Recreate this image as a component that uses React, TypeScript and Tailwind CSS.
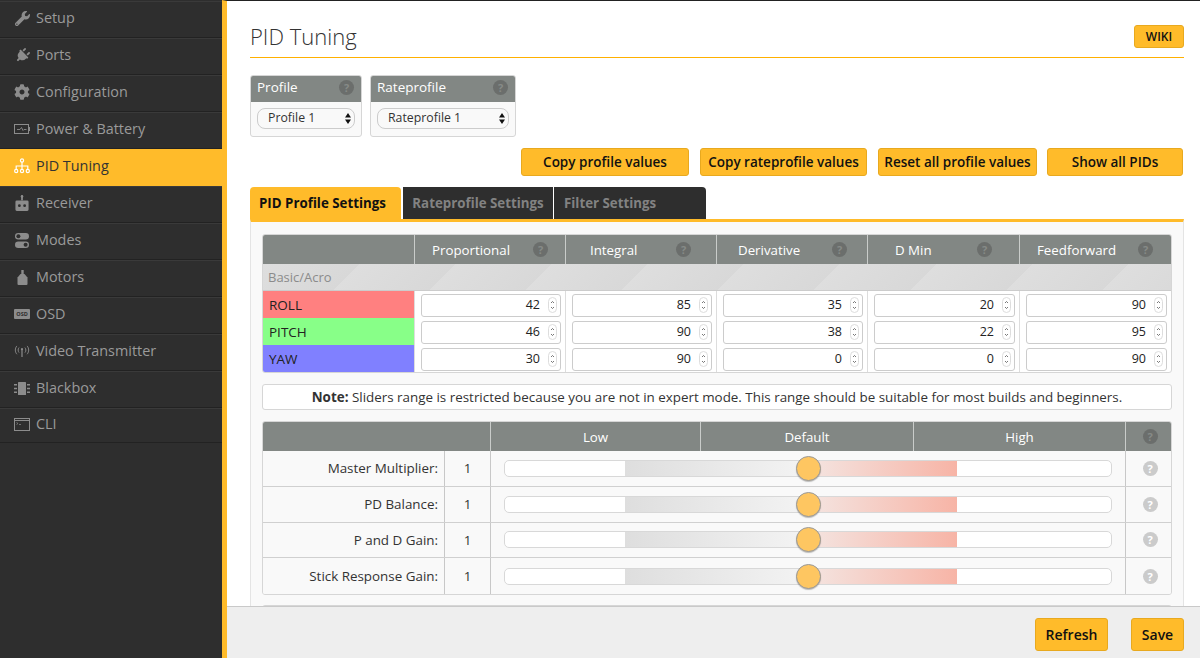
import type { ReactNode } from 'react';
import { FaCog, FaPlug, FaWrench } from 'react-icons/fa';

function PowerIcon() {
  return (
    <svg viewBox="0 0 16 10" className="w-[16px] h-[10px]" fill="none" stroke="currentColor">
      <rect x="0.5" y="0.5" width="14" height="9" strokeWidth="1" />
      <rect x="14.5" y="3" width="1.5" height="4" fill="currentColor" stroke="none" />
      <path d="M3 5.5h3l1.5-2 1.5 3 1-1h2.5" strokeWidth="0.9" />
    </svg>
  );
}

function SitemapIcon() {
  return (
    <svg viewBox="0 0 16 16" className="w-[16px] h-[16px]" fill="none" stroke="currentColor" strokeWidth="1.2">
      <circle cx="8" cy="2.5" r="1.6" />
      <circle cx="2.2" cy="13" r="1.6" />
      <circle cx="8" cy="13" r="1.6" />
      <circle cx="13.8" cy="13" r="1.6" />
      <path d="M8 4v7.4M2.2 11.4V8h11.6v3.4" />
    </svg>
  );
}

function ReceiverIcon() {
  return (
    <svg viewBox="0 0 16 18" className="w-[14px] h-[16px]" fill="currentColor">
      <rect x="7" y="0" width="2" height="6" />
      <circle cx="8" cy="1.5" r="1.5" />
      <path d="M2 6h12a1.5 1.5 0 0 1 1.5 1.5v9A1.5 1.5 0 0 1 14 18H2a1.5 1.5 0 0 1-1.5-1.5v-9A1.5 1.5 0 0 1 2 6z" />
      <circle cx="5" cy="12" r="1.6" fill="#2e2e2e" />
      <circle cx="11" cy="12" r="1.6" fill="#2e2e2e" />
    </svg>
  );
}

function ModesIcon() {
  return (
    <svg viewBox="0 0 14 15" className="w-[14px] h-[15px]" fill="currentColor">
      <rect x="0" y="0" width="14" height="6.5" rx="3.2" />
      <circle cx="3.4" cy="3.2" r="2" fill="#2e2e2e" />
      <rect x="0" y="8.5" width="14" height="6.5" rx="3.2" />
      <circle cx="10.6" cy="11.7" r="2" fill="#2e2e2e" />
    </svg>
  );
}

function MotorIcon() {
  return (
    <svg viewBox="0 0 11 15" className="w-[11px] h-[15px]" fill="currentColor">
      <rect x="4.3" y="0" width="2.4" height="5" />
      <path d="M3.5 4h4l3 3.5V14a1 1 0 0 1-1 1h-8a1 1 0 0 1-1-1V7.5z" />
    </svg>
  );
}

function OsdIcon() {
  return (
    <svg viewBox="0 0 16 10" className="w-[16px] h-[10px]">
      <rect width="16" height="10" rx="1" fill="currentColor" />
      <text x="8" y="7.2" textAnchor="middle" fontSize="5.5" fontWeight="700" fill="#2e2e2e" fontFamily="'Open Sans', sans-serif">
        OSD
      </text>
    </svg>
  );
}

function VtxIcon() {
  return (
    <svg viewBox="0 0 17 13" className="w-[16px] h-[12px]" fill="none" stroke="currentColor" strokeWidth="1">
      <path d="M3 1C.7 3.5.7 7.5 3 10M14 1c2.3 2.5 2.3 6.5 0 9M5.3 2.8c-1.3 1.6-1.3 3.8 0 5.4M11.7 2.8c1.3 1.6 1.3 3.8 0 5.4" />
      <path d="M8.5 4.5V13" strokeWidth="1.3" />
      <circle cx="8.5" cy="4.5" r="1.2" fill="currentColor" stroke="none" />
    </svg>
  );
}

function BlackboxIcon() {
  return (
    <svg viewBox="0 0 16 13" className="w-[16px] h-[13px]" fill="currentColor">
      <rect x="4" y="0" width="8" height="13" rx="0.5" />
      <path d="M0 2h3v1.4H0zM0 5.8h3v1.4H0zM0 9.6h3V11H0zM13 2h3v1.4h-3zM13 5.8h3v1.4h-3zM13 9.6h3V11h-3z" />
    </svg>
  );
}

function CliIcon() {
  return (
    <svg viewBox="0 0 16 13" className="w-[16px] h-[13px]" fill="none" stroke="currentColor">
      <rect x="0.5" y="0.5" width="15" height="12" strokeWidth="1" />
      <path d="M0.5 2.5h15" strokeWidth="1" />
      <path d="M2.5 4.5l1.5 1-1.5 1M5 6.5h2" strokeWidth="0.7" />
    </svg>
  );
}

const navItems: { label: string; icon: ReactNode; active?: boolean }[] = [
  { label: 'Setup', icon: <FaWrench size={15} /> },
  { label: 'Ports', icon: <FaPlug size={15} className="rotate-45" /> },
  { label: 'Configuration', icon: <FaCog size={16} /> },
  { label: 'Power & Battery', icon: <PowerIcon /> },
  { label: 'PID Tuning', icon: <SitemapIcon />, active: true },
  { label: 'Receiver', icon: <ReceiverIcon /> },
  { label: 'Modes', icon: <ModesIcon /> },
  { label: 'Motors', icon: <MotorIcon /> },
  { label: 'OSD', icon: <OsdIcon /> },
  { label: 'Video Transmitter', icon: <VtxIcon /> },
  { label: 'Blackbox', icon: <BlackboxIcon /> },
  { label: 'CLI', icon: <CliIcon /> },
];

const pidColumns = [
  { title: 'Proportional', pad: 'pl-[17px] pr-[17px]' },
  { title: 'Integral', pad: 'pl-[24px] pr-[25px]' },
  { title: 'Derivative', pad: 'pl-[21px] pr-[20px]' },
  { title: 'D Min', pad: 'pl-[27px] pr-[27px]' },
  { title: 'Feedforward', pad: 'pl-[17px] pr-[18px]' },
];

const pidRows = [
  { name: 'ROLL', color: 'bg-[#ff8080]', values: [42, 85, 35, 20, 90] },
  { name: 'PITCH', color: 'bg-[#88ff88]', values: [46, 90, 38, 22, 95] },
  { name: 'YAW', color: 'bg-[#8080ff]', values: [30, 90, 0, 0, 90] },
];

const sliders = ['Master Multiplier:', 'PD Balance:', 'P and D Gain:', 'Stick Response Gain:'];

function Help({ light }: { light?: boolean }) {
  return (
    <span
      className={`flex h-[15px] w-[15px] shrink-0 items-center justify-center rounded-full text-[11px] font-bold leading-none ${
        light ? 'bg-[#cbcbcb] text-white' : 'bg-[#6b6e6c] text-[#868a87]'
      }`}
    >
      ?
    </span>
  );
}

function YellowButton({ children, className }: { children: ReactNode; className: string }) {
  return (
    <div
      className={`flex items-center justify-center rounded-[3px] border border-[#e8a91f] bg-[#ffbb2a] font-semibold text-[#111] ${className}`}
    >
      {children}
    </div>
  );
}

function Select({ label }: { label: string }) {
  return (
    <div className="flex h-[21px] flex-1 items-center justify-between rounded-[8px] border border-[#ccc] bg-[#f9f9f9] pl-[10px] pr-[3px] text-[12.3px] text-[#333]">
      {label}
      <svg viewBox="0 0 6 11" className="h-[11px] w-[6px]" fill="#111">
        <path d="M3 0l3 4.4H0zM3 11L0 6.6h6z" />
      </svg>
    </div>
  );
}

function NumberField({ value }: { value: number }) {
  return (
    <div className="mt-[1px] flex h-[23px] items-center justify-end rounded-[3px] border border-[#ccc] bg-white pr-[3px] text-[12.5px] text-[#222]">
      {value}
      <span className="ml-[8px] flex h-[16px] w-[9px] items-center justify-center rounded-full border border-[#ddd]">
        <svg viewBox="0 0 5 10" className="h-[10px] w-[5px]" fill="none" stroke="#555" strokeWidth="0.8">
          <path d="M1 3l1.5-1.5L4 3M1 7l1.5 1.5L4 7" />
        </svg>
      </span>
    </div>
  );
}

export default function App() {
  return (
    <div className="flex h-[658px] w-[1200px] overflow-hidden bg-white font-['Open_Sans',sans-serif] text-[13px] text-[#333]">
      {/* Sidebar */}
      <nav className="w-[222px] shrink-0 bg-[#2e2e2e] pt-[1px] text-[14.4px] text-[#9a9a9a]">
        {navItems.map((item) => (
          <div
            key={item.label}
            className={`flex h-[37px] items-center border-b pb-[2px] last:h-[35px] ${
              item.active
                ? 'border-[#ffbb2a] bg-[#ffbb2a] text-[#333]'
                : 'border-[#222] shadow-[inset_0_1px_0_#3a3a3a]'
            }`}
          >
            <span className={`flex w-[36px] shrink-0 justify-center pl-[8px] ${item.active ? 'text-white' : 'text-[#8c8c8c]'}`}>
              {item.icon}
            </span>
            {item.label}
          </div>
        ))}
      </nav>

      {/* Main */}
      <div className="flex min-w-0 flex-1 flex-col border-l-[5px] border-t border-l-[#ffbb2a] border-t-[#222]">
        <main className="min-h-0 flex-1 overflow-hidden pl-[23px] pr-[16px]">
          <div className="flex h-[57px] items-start justify-between border-b border-b-[#ffb000]">
            <h1 className="mt-[17px] text-[22px] font-light leading-[36px] text-[#333]">PID Tuning</h1>
            <YellowButton className="mt-[24px] h-[23px] w-[50px] text-[12px]">WIKI</YellowButton>
          </div>

          {/* Profile selectors */}
          <div className="mt-[17px] flex gap-[8px]">
            {[
              { title: 'Profile', value: 'Profile 1', width: 'w-[112px]' },
              { title: 'Rateprofile', value: 'Rateprofile 1', width: 'w-[146px]' },
            ].map((box) => (
              <div key={box.title} className={`${box.width} overflow-hidden rounded-[3px] border border-[#d6d6d6] bg-[#f9f9f9]`}>
                <div className="flex h-[26px] items-center justify-between bg-[#828784] pb-[3px] pl-[6px] pr-[7px] text-[13.5px] font-medium text-white">
                  {box.title}
                  <Help />
                </div>
                <div className="flex h-[34px] items-center px-[6px] pb-[1px]">
                  <Select label={box.value} />
                </div>
              </div>
            ))}
          </div>

          {/* Actions */}
          <div className="mt-[11px] flex justify-end gap-[11px] pr-[1px] text-[13.5px]">
            <YellowButton className="h-[28px] w-[168px]">Copy profile values</YellowButton>
            <YellowButton className="h-[28px] w-[167px]">Copy rateprofile values</YellowButton>
            <YellowButton className="mr-[-1px] h-[28px] w-[159px]">Reset all profile values</YellowButton>
            <YellowButton className="h-[28px] w-[136px]">Show all PIDs</YellowButton>
          </div>

          {/* Tabs */}
          <div className="mt-[11px] flex h-[32px] gap-[1px] text-[13.3px] font-bold">
            <div className="mr-[1px] flex w-[151px] items-center rounded-t-[4px] bg-[#ffbb2a] pl-[9px] pt-[1px] text-[#111]">
              PID Profile Settings
            </div>
            <div className="flex w-[150px] items-center justify-center bg-[#2e2e2e] pt-[1px] text-[#828282]">
              Rateprofile Settings
            </div>
            <div className="flex w-[152px] items-center rounded-tr-[4px] bg-[#2e2e2e] pl-[10px] pt-[1px] text-[#828282]">
              Filter Settings
            </div>
          </div>

          {/* Panel */}
          <div className="border-x border-t-[3px] border-x-[#e4e4e4] border-t-[#ffbb2a] bg-[#f9f9f9] px-[11px] pt-[12px]">
            {/* PID table */}
            <div className="overflow-hidden rounded-[3px] border border-[#d6d6d6] bg-white">
              <div className="grid h-[29px] grid-cols-[151px_151px_151px_151px_152px_1fr] bg-[#828784] text-[13.3px] text-white">
                <div />
                {pidColumns.map((col) => (
                  <div key={col.title} className={`flex items-center justify-between border-l border-[#c9ccca] ${col.pad}`}>
                    <span className="pt-[2px]">{col.title}</span>
                    <Help />
                  </div>
                ))}
              </div>
              <div className="flex h-[27px] items-center border-b border-[#ccc] bg-[repeating-linear-gradient(135deg,#dedede_0px,#d8d8d8_68px,#dedede_68px)] pl-[5px] pt-[1px] text-[13px] text-[#8b8b8b]">
                Basic/Acro
              </div>
              {pidRows.map((row) => (
                <div key={row.name} className="grid h-[27px] grid-cols-[151px_151px_151px_151px_152px_1fr] text-[13.5px]">
                  <div className={`${row.color} flex items-center pl-[6px] pt-[1px] text-[#222]`}>{row.name}</div>
                  {row.values.map((value, i) => (
                    <div key={i} className="flex flex-col justify-center border-l border-[#ddd] pl-[6px] pr-[4px]">
                      <NumberField value={value} />
                    </div>
                  ))}
                </div>
              ))}
            </div>

            {/* Note */}
            <div className="mt-[11px] flex h-[26px] items-center justify-center rounded-[3px] border border-[#d6d6d6] bg-white text-[13.4px] text-[#333]">
              <span>
                <b className="font-bold">Note:</b> Sliders range is restricted because you are not in expert mode. This
                range should be suitable for most builds and beginners.
              </span>
            </div>

            {/* Sliders */}
            <div className="mt-[11px] overflow-hidden rounded-[3px] border border-[#d6d6d6]">
              <div className="grid h-[29px] grid-cols-[227px_210px_213px_212px_1fr] bg-[#828784] text-[13.3px] text-white">
                <div />
                {['Low', 'Default', 'High'].map((head) => (
                  <div key={head} className="flex items-center justify-center border-l border-[#c9ccca] pt-[2px]">
                    {head}
                  </div>
                ))}
                <div className="flex items-center justify-center border-l border-[#c9ccca] pl-[3px]">
                  <Help />
                </div>
              </div>
              {sliders.map((label) => (
                <div
                  key={label}
                  className="grid h-[35.75px] grid-cols-[181px_46px_635px_1fr] border-b border-[#d0d0d0] bg-[#f9f9f9] text-[13.4px] last:border-b-0"
                >
                  <div className="flex items-center justify-end pr-[6px] text-[#333]">{label}</div>
                  <div className="flex items-center justify-center border-l border-[#c8c8c8]">1</div>
                  <div className="flex items-center border-l border-[#c8c8c8] pl-[13px] pr-[13px]">
                    <div className="relative h-[17px] w-full rounded-[5px] border border-[#d8d8d8] bg-white">
                      <div className="ml-[120px] h-full w-[332px] bg-[linear-gradient(90deg,#dedede_0%,#f3f3f3_54%,#f4e4e0_56%,#f7b4a6_100%)]" />
                      <span className="absolute left-[291px] top-[-5px] h-[25px] w-[25px] rounded-full border border-[#999] bg-[#fec661] shadow-[0_1px_1px_rgba(0,0,0,0.25)]" />
                    </div>
                  </div>
                  <div className="flex items-center justify-center border-l border-[#c8c8c8] pl-[3px]">
                    <Help light />
                  </div>
                </div>
              ))}
            </div>
            <div className="mt-[10px] h-[4px] rounded-t-[3px] border border-[#d6d6d6] bg-[#eee]" />
          </div>
        </main>

        {/* Footer */}
        <footer className="flex h-[52px] shrink-0 items-start justify-end gap-[23px] border-t border-[#c9c9c9] bg-[#eeeeee] pr-[16px] pt-[11px] text-[14px]">
          <YellowButton className="h-[33px] w-[73px]">Refresh</YellowButton>
          <YellowButton className="h-[33px] w-[53px]">Save</YellowButton>
        </footer>
      </div>
    </div>
  );
}
